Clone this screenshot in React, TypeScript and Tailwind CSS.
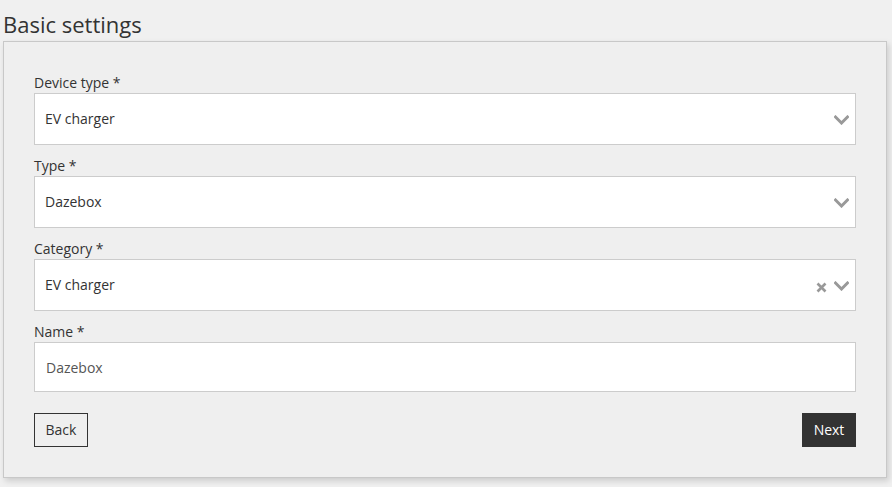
import React from "react";

const Chevron = () => (
  <svg width="15" height="10" viewBox="0 0 15 10" className="block">
    <path d="M1.5 2 L7.5 8 L13.5 2" fill="none" stroke="#999" strokeWidth="3" strokeLinecap="square" />
  </svg>
);

const Cross = () => (
  <svg width="11" height="11" viewBox="0 0 11 11" className="block">
    <path d="M1.5 1.5 L9.5 9.5 M9.5 1.5 L1.5 9.5" fill="none" stroke="#999" strokeWidth="2.6" />
  </svg>
);

function SelectField({ label, value, clearable }: { label: string; value: string; clearable?: boolean }) {
  return (
    <div className="mb-[10px]">
      <div className="h-[21px] text-[14px] leading-[21px] text-[#333]">{label}</div>
      <div className="flex h-[52px] items-center border border-[#ccc] bg-white pl-[10px] pr-[6px]">
        <span className="flex-1 pb-[2px] text-[14px] text-[#333]">{value}</span>
        <div className="flex items-center gap-[7px] pt-[1px]">
          {clearable && <div className="pt-[4px]"><Cross /></div>}
          <Chevron />
        </div>
      </div>
    </div>
  );
}

export default function App() {
  return (
    <div className="min-h-[487px] bg-[#f0f0f0] px-[3px] pt-[8px]" style={{ fontFamily: '"Open Sans", sans-serif' }}>
      <h1 className="h-[33px] text-[22px] leading-[33px] text-[#333]">Basic settings</h1>
      <div className="w-[884px] border border-[#c8c8c8] bg-[#efefef] px-[30px] pt-[30px] pb-[30px] shadow-[2px_3px_6px_rgba(0,0,0,0.15)]">
        <SelectField label="Device type *" value="EV charger" />
        <SelectField label="Type *" value="Dazebox" />
        <SelectField label="Category *" value="EV charger" clearable />
        <div>
          <div className="h-[21px] text-[14px] leading-[21px] text-[#333]">Name *</div>
          <div className="flex h-[50px] items-center border border-[#ccc] bg-white pl-[11px]">
            <span className="text-[14px] text-[#555]">Dazebox</span>
          </div>
        </div>
        <div className="mt-[21px] flex justify-between">
          <button className="h-[34px] w-[54px] border border-[#333] bg-transparent text-[14px] leading-[20px] text-[#333]">Back</button>
          <button className="h-[34px] w-[54px] bg-[#333] pb-[1px] text-[14px] leading-[20px] text-white">Next</button>
        </div>
      </div>
    </div>
  );
}
